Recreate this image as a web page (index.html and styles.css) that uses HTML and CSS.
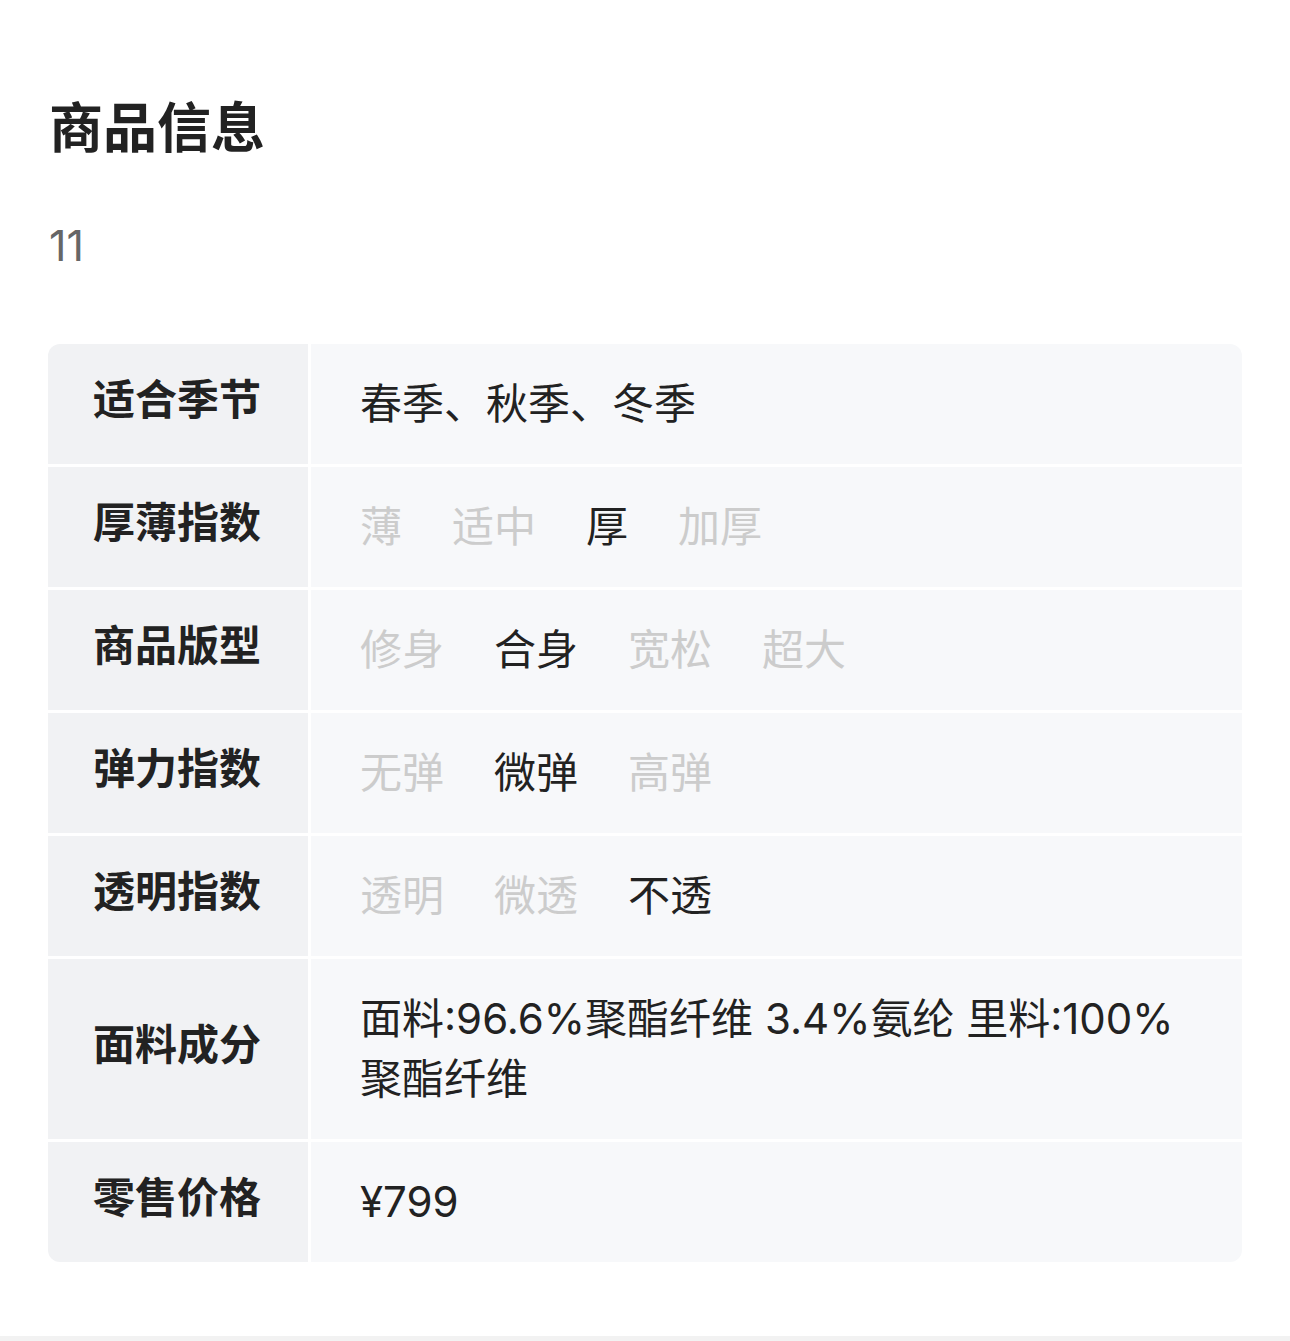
FILE: index.html
```html
<!DOCTYPE html>
<html lang="zh-CN">
<head>
<meta charset="utf-8">
<title>商品信息</title>
<link rel="stylesheet" href="styles.css">
</head>
<body>
<section class="info">
  <h1 class="info-title">商品信息</h1>
  <p class="info-desc">11</p>
  <div class="spec-table">
    <div class="spec-label">适合季节</div>
    <div class="spec-value">春季、秋季、冬季</div>

    <div class="spec-label">厚薄指数</div>
    <div class="spec-value options">
      <span class="opt">薄</span><span class="opt">适中</span><span class="opt on">厚</span><span class="opt">加厚</span>
    </div>

    <div class="spec-label">商品版型</div>
    <div class="spec-value options">
      <span class="opt">修身</span><span class="opt on">合身</span><span class="opt">宽松</span><span class="opt">超大</span>
    </div>

    <div class="spec-label">弹力指数</div>
    <div class="spec-value options">
      <span class="opt">无弹</span><span class="opt on">微弹</span><span class="opt">高弹</span>
    </div>

    <div class="spec-label">透明指数</div>
    <div class="spec-value options">
      <span class="opt">透明</span><span class="opt">微透</span><span class="opt on">不透</span>
    </div>

    <div class="spec-label">面料成分</div>
    <div class="spec-value">面料:96.6%聚酯纤维 3.4%氨纶 里料:100%聚酯纤维</div>

    <div class="spec-label">零售价格</div>
    <div class="spec-value">¥799</div>
  </div>
</section>
<div class="bottom-band"></div>
</body>
</html>
```
FILE: styles.css
```css
* { box-sizing: border-box; }
html, body {
  margin: 0;
  padding: 0;
  background: #ffffff;
}
body {
  font-family: Inter, "Noto Sans CJK SC", sans-serif;
  color: #222222;
}
.info {
  padding: 91px 48px 74px 49px;
}
.info-title {
  margin: 0;
  font-size: 54px;
  line-height: 76px;
  font-weight: 600;
  color: #222222;
}
.info-desc {
  margin: 48px 0 0 0;
  font-size: 43px;
  line-height: 60px;
  color: #666666;
}
.spec-table {
  margin-top: 69px;
  margin-left: -1px;
  display: grid;
  grid-template-columns: 260px 1fr;
  gap: 3px;
  border-radius: 12px;
  overflow: hidden;
  background: #ffffff;
}
.spec-label {
  background: #f1f2f4;
  display: flex;
  align-items: center;
  padding: 24px 20px 32px 45px;
  font-size: 42px;
  line-height: 60px;
  font-weight: 600;
  color: #222222;
}
.spec-value {
  background: #f7f8fa;
  padding: 30px 48px 30px 49px;
  font-size: 42px;
  line-height: 60px;
  color: #222222;
  display: flex;
  align-items: center;
}
.options {
  gap: 50px;
}
.opt {
  color: #cccccc;
}
.opt.on {
  color: #222222;
}
.bottom-band {
  height: 5px;
  background: #f2f2f2;
}
```
